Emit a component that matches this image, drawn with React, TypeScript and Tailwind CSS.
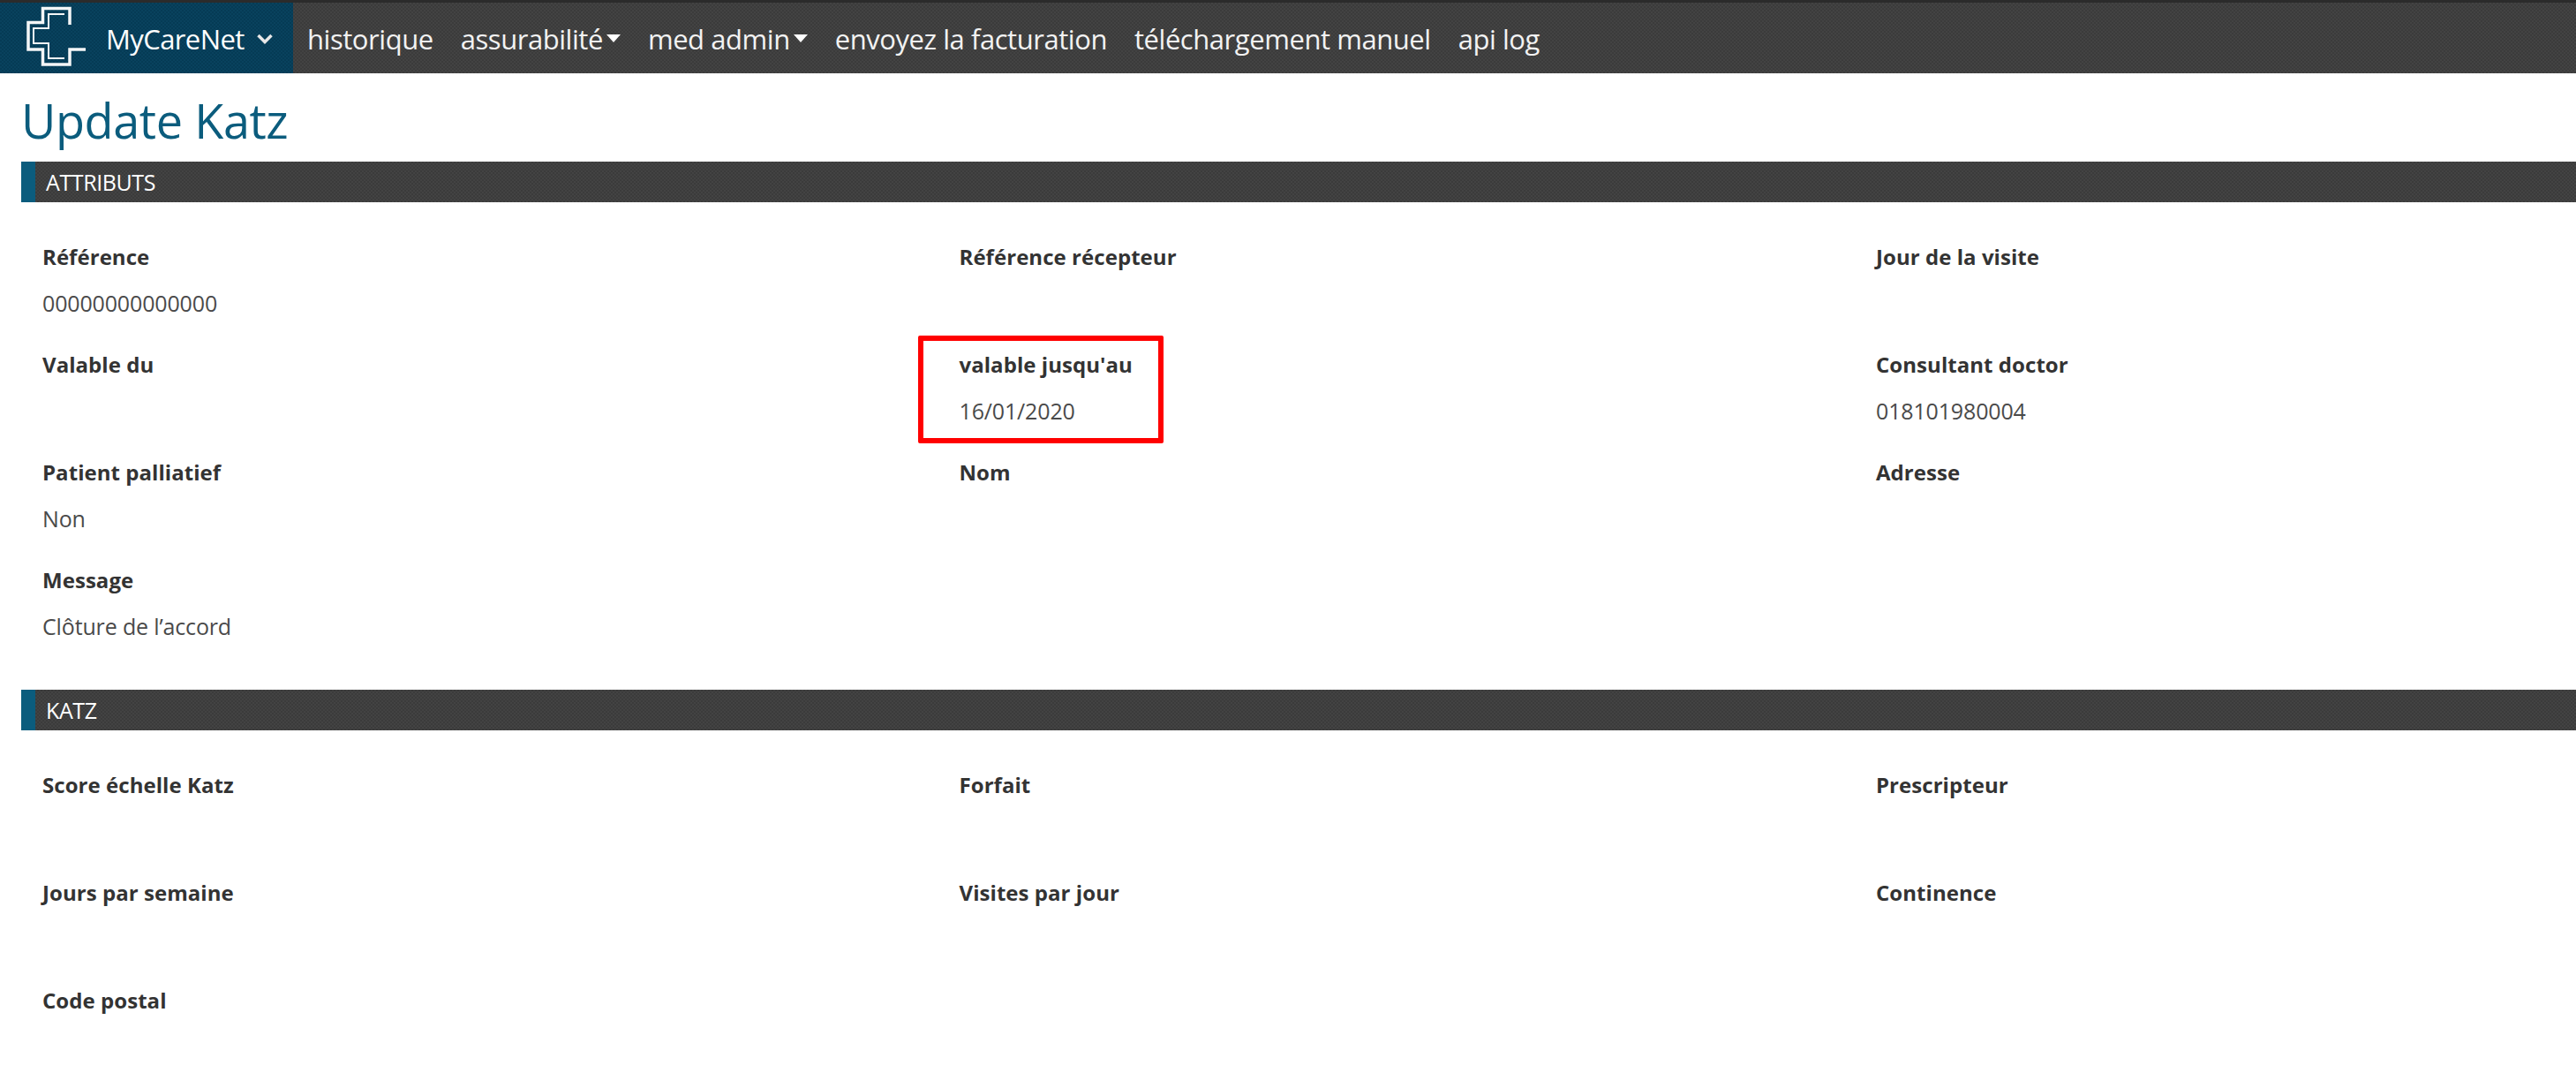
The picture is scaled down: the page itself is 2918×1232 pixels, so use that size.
const FONT = "font-['Open_Sans','Noto_Sans',sans-serif]"

const TEXTURE =
  "bg-[repeating-conic-gradient(rgba(0,0,0,0.07)_0_25%,rgba(255,255,255,0.015)_0_50%)] bg-[length:4px_4px]"

const ATTRIBUTS = [
  { label: "Référence", value: "00000000000000" },
  { label: "Référence récepteur" },
  { label: "Jour de la visite" },
  { label: "Valable du" },
  { label: "valable jusqu'au", value: "16/01/2020" },
  { label: "Consultant doctor", value: "018101980004" },
  { label: "Patient palliatief", value: "Non" },
  { label: "Nom" },
  { label: "Adresse" },
  { label: "Message", value: "Clôture de l’accord" },
]

const KATZ = [
  { label: "Score échelle Katz" },
  { label: "Forfait" },
  { label: "Prescripteur" },
  { label: "Jours par semaine" },
  { label: "Visites par jour" },
  { label: "Continence" },
  { label: "Code postal" },
]

const Logo = () => (
  <svg width="120" height="83" viewBox="0 0 120 83" fill="none" stroke="#f4f6f7" className="absolute left-0 top-[-3px]">
    <path d="M79 28V9.5H48.5V25.5H32V56H48.5V73H79V56H97" strokeWidth="3.5" />
    <path d="M73 16H55V32H38V49H55V66H73" strokeWidth="2" />
  </svg>
)

const NavItem = ({ label, caret }: { label: string; caret?: boolean }) => (
  <a className="flex items-center pt-[2px] text-[31px] leading-none text-[#f2f2f2] mr-[31px] whitespace-nowrap tracking-[-0.45px]">
    {label}
    {caret && <span className="ml-[4px] mt-[-2px] w-0 h-0 border-x-[8px] border-x-transparent border-t-[9px] border-t-white" />}
  </a>
)

const Section = ({ title, fields }: { title: string; fields: { label: string; value?: string }[] }) => (
  <section>
    <div className={`h-[46px] flex items-center pt-[2px] bg-[#404040] border-l-[16px] border-[#0b5c7d] pl-[12px] text-[25px] text-white tracking-[-0.4px] ${TEXTURE}`}>
      {title}
    </div>
    <div className="grid grid-cols-[1038.5px_1038.5px_1fr] pl-[24px] pt-[46px]">
      {fields.map((f) => (
        <div key={f.label} className="h-[122px]">
          <div className="text-[24px] leading-[32px] font-bold text-[#333] tracking-[0.05px]">{f.label}</div>
          {f.value && <div className="mt-[21px] text-[25px] leading-[31px] text-[#4a4a4a] tracking-[-0.15px]">{f.value}</div>}
        </div>
      ))}
    </div>
  </section>
)

export default function App() {
  return (
    <div className={`relative h-[1232px] overflow-hidden bg-white ${FONT}`}>
      <nav className={`h-[83px] flex items-stretch bg-[#404040] border-t-[3px] border-[#2b2b2b] ${TEXTURE}`}>
        <div className={`relative w-[332px] mr-[16px] flex items-center pt-[2px] bg-[#053f5b] pl-[120px] text-[31px] text-white tracking-[-0.6px] ${TEXTURE}`}>
          <Logo />
          MyCareNet
          <svg width="18" height="12" viewBox="0 0 18 12" className="ml-[14px]" fill="none" stroke="#e8e8e8" strokeWidth="3.5">
            <path d="M1.5 2L9 9.5L16.5 2" />
          </svg>
        </div>
        <NavItem label="historique" />
        <NavItem label="assurabilité" caret />
        <NavItem label="med admin" caret />
        <NavItem label="envoyez la facturation" />
        <NavItem label="téléchargement manuel" />
        <NavItem label="api log" />
      </nav>

      <main className="pl-[24px]">
        <h1 className="h-[100px] flex items-center pt-[6px] text-[54px] text-[#0b5c7d] tracking-[-0.4px] font-normal">Update Katz</h1>
        <Section title="ATTRIBUTS" fields={ATTRIBUTS} />
        <div className="h-[18px]" />
        <Section title="KATZ" fields={KATZ} />
      </main>

      {/* annotation drawn over the screenshot */}
      <div className="absolute left-[1040px] top-[380px] w-[278px] h-[122px] border-[6px] border-[#ff0000] rounded-[2px]" />
    </div>
  )
}
